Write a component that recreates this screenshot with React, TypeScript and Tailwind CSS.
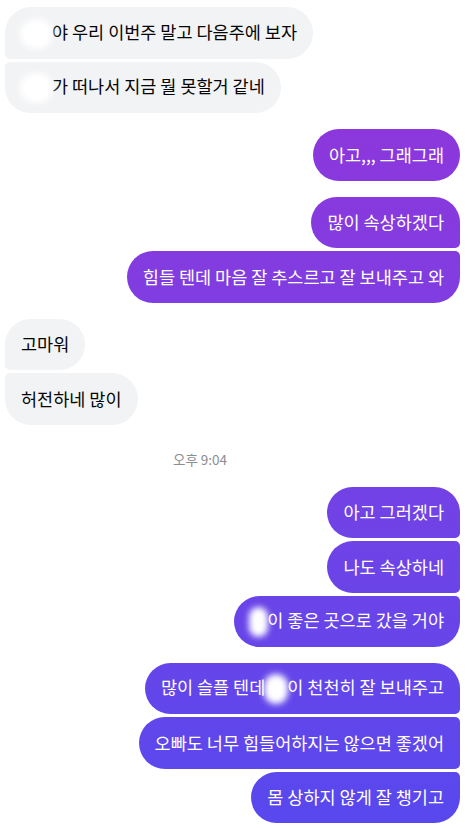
import React from 'react';

type Pos = 'single' | 'first' | 'middle' | 'last';

interface Msg {
    text: string;
    // blurred-out name inserted before `text` (width in px), optional text before it
    before?: string;
    blob?: number;
    pos: Pos;
}

const received: Msg[][] = [
    [
        { text: '야 우리 이번주 말고 다음주에 보자', blob: 31, pos: 'first' },
        { text: '가 떠나서 지금 뭘 못할거 같네', blob: 31, pos: 'last' },
    ],
    [
        { text: '고마워', pos: 'first' },
        { text: '허전하네 많이', pos: 'last' },
    ],
];

const sentA: Msg[][] = [
    [{ text: '아고,,, 그래그래', pos: 'single' }],
    [
        { text: '많이 속상하겠다', pos: 'first' },
        { text: '힘들 텐데 마음 잘 추스르고 잘 보내주고 와', pos: 'last' },
    ],
];

const sentB: Msg[][] = [
    [
        { text: '아고 그러겠다', pos: 'first' },
        { text: '나도 속상하네', pos: 'middle' },
        { text: '이 좋은 곳으로 갔을 거야', blob: 17, pos: 'last' },
    ],
    [
        { text: '이 천천히 잘 보내주고', before: '많이 슬플 텐데', blob: 22, pos: 'first' },
        { text: '오빠도 너무 힘들어하지는 않으면 좋겠어', pos: 'middle' },
        { text: '몸 상하지 않게 잘 챙기고', pos: 'last' },
    ],
];

const leftCorners: Record<Pos, string> = {
    single: 'rounded-[26px]',
    first: 'rounded-[26px] rounded-bl-[5px]',
    middle: 'rounded-[26px] rounded-l-[5px]',
    last: 'rounded-[26px] rounded-tl-[5px]',
};

const rightCorners: Record<Pos, string> = {
    single: 'rounded-[26px]',
    first: 'rounded-[26px] rounded-br-[5px]',
    middle: 'rounded-[26px] rounded-r-[5px]',
    last: 'rounded-[26px] rounded-tr-[5px]',
};

const Blob: React.FC<{ w: number }> = ({ w }) => (
    <span className="relative inline-block h-[24px] align-middle" style={{ width: w }}>
        <span className="absolute -inset-x-[1px] -inset-y-[3px] rounded-full bg-white blur-[3px]" />
    </span>
);

const Bubble: React.FC<{ m: Msg; mine: boolean }> = ({ m, mine }) => (
    <div
        className={
            mine
                ? `flex h-[51.5px] items-center px-4 text-white bg-gradient-to-b from-[#9432d9] to-[#5748ee] bg-fixed ${rightCorners[m.pos]}`
                : `flex h-[51.5px] items-center px-4 text-[#050505] bg-[#f2f3f5] ${leftCorners[m.pos]}`
        }
    >
        <span className="whitespace-nowrap text-[17.5px] leading-[24px]">
            {m.before}
            {m.blob ? <Blob w={m.blob} /> : null}
            {m.text}
        </span>
    </div>
);

const Group: React.FC<{ msgs: Msg[]; mine: boolean; className?: string }> = ({ msgs, mine, className = '' }) => (
    <div className={`flex flex-col gap-[3px] ${mine ? 'items-end' : 'items-start'} ${className}`}>
        {msgs.map((m, i) => (
            <Bubble key={i} m={m} mine={mine} />
        ))}
    </div>
);

export default function App() {
    return (
        <div
            className="min-h-[828px] w-[470px] overflow-hidden bg-white pl-[5px] pr-[10px] pt-[7px]"
            style={{ fontFamily: '"Noto Sans CJK KR", "Noto Sans", sans-serif' }}
        >
            <Group msgs={received[0]} mine={false} />
            <Group msgs={sentA[0]} mine className="mt-[16px]" />
            <Group msgs={sentA[1]} mine className="mt-[16px]" />
            <Group msgs={received[1]} mine={false} className="mt-[16px]" />

            {/* time divider */}
            <div className="mt-[26px] h-[17px] pl-[168px] text-[13.5px] leading-[17px] text-[#8a8d91]">오후 9:04</div>

            <Group msgs={sentB[0]} mine className="mt-[19px]" />
            <Group msgs={sentB[1]} mine className="mt-[15.5px]" />
        </div>
    );
}
